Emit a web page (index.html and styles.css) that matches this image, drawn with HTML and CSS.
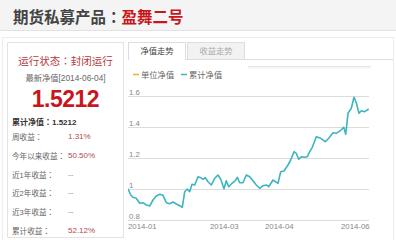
FILE: index.html
```html
<!DOCTYPE html>
<html>
<head>
    <title>期货私募产品：盈舞二号</title>
    <link rel="stylesheet" href="styles.css">
</head>
<body>
    <div class="page-title">期货私募产品<span class="colon">：</span><span class="fund-name">盈舞二号</span></div>
    <div class="fund-container">
        <div class="summary-box">
            <div class="status">运行状态<span class="colon">：</span>封闭运行</div>
            <div class="latest-label">最新净值[2014-06-04]</div>
            <div class="latest-value">1.5212</div>
            <div class="total-nav">累计净值<span class="colon">：</span>1.5212</div>
            <div class="stat-row"><span class="stat-label">周收益<span class="colon">：</span></span><span class="stat-value">1.31%</span></div>
            <div class="stat-row"><span class="stat-label">今年以来收益<span class="colon">：</span></span><span class="stat-value">50.50%</span></div>
            <div class="stat-row"><span class="stat-label">近1年收益<span class="colon">：</span></span><span class="stat-empty">--</span></div>
            <div class="stat-row"><span class="stat-label">近2年收益<span class="colon">：</span></span><span class="stat-empty">--</span></div>
            <div class="stat-row"><span class="stat-label">近3年收益<span class="colon">：</span></span><span class="stat-empty">--</span></div>
            <div class="stat-row"><span class="stat-label">累计收益<span class="colon">：</span></span><span class="stat-value">52.12%</span></div>
        </div>
        <div class="chart-panel">
            <div class="tab-bar">
                <div class="tab tab-active">净值走势</div>
                <div class="tab">收益走势</div>
            </div>
            <svg class="chart" width="262" height="177" viewBox="130 60 262 177">
                <!-- toolbar line -->
                <line x1="250" y1="66.5" x2="373" y2="66.5" stroke="#e4e4e4" stroke-width="1"/>
                <line x1="250" y1="68" x2="373" y2="68" stroke="#f0f0f0" stroke-width="1"/>

                <!-- legend -->
                <line x1="135" y1="74.5" x2="141" y2="74.5" stroke="#e6b533" stroke-width="1.5"/>
                <text x="143" y="77.5" class="legend-text">单位净值</text>
                <line x1="183" y1="74.5" x2="189" y2="74.5" stroke="#3db5be" stroke-width="1.5"/>
                <text x="191" y="77.5" class="legend-text">累计净值</text>

                <!-- grid -->
                <g stroke="#dcdcdc" stroke-width="1">
                    <line x1="130" y1="96.5" x2="371" y2="96.5"/>
                    <line x1="130" y1="127.5" x2="371" y2="127.5"/>
                    <line x1="130" y1="158.5" x2="371" y2="158.5"/>
                    <line x1="130" y1="189.5" x2="371" y2="189.5"/>
                    <line x1="130" y1="220.5" x2="371" y2="220.5"/>
                </g>
                <text x="131" y="95" class="axis-text">1.6</text>
                <text x="131" y="126" class="axis-text">1.4</text>
                <text x="131" y="157" class="axis-text">1.2</text>
                <text x="131" y="188" class="axis-text">1</text>
                <text x="131" y="219" class="axis-text">0.8</text>

                <text x="130" y="229" class="axis-text">2014-01</text>
                <text x="212" y="229" class="axis-text">2014-03</text>
                <text x="267" y="229" class="axis-text">2014-04</text>
                <text x="343" y="229" class="axis-text">2014-06</text>

                <polyline fill="none" stroke="#3db5be" stroke-width="1.6" stroke-linejoin="round"
                    points="130,188.7 132.7,195 135,197.3 138.3,198.3 141.7,203.3 145,202.7 148.3,205 151.7,206 155,200 158.3,196 161.7,194.3 165,195.3 168.3,202.7 171.7,203.7 175,202 178.3,204 181.7,205.7 184.3,207.3 186.7,191.7 189.3,189 191.7,191.7 194,184.3 196.7,185 200,176.7 202.7,177.7 205,179.3 207.3,177.7 210,181.7 213.3,185 216.7,178.3 220,175 222.7,179.3 226,188.7 228.3,180.7 230.7,186.7 234,183.3 237.3,180.7 239.3,177.3 241.7,182.7 245,182.7 248.3,175 251.7,176.7 255,180.7 258.3,185 261.7,188.3 265,185.7 268.3,185 270.7,186.7 275,180 280,183.3 282.7,171.7 286,171 290,165 292.7,160 296,151.7 298.3,153.3 300.7,159.3 303.3,156.7 306.7,157.3 309.3,156.7 311.7,151.7 314.3,147.3 318.3,136.7 322.7,138.3 327.3,141.7 330.7,138.3 335,132.7 338.3,133.3 342.3,130.7 345.7,127.3 347.7,134.3 350,113.3 353.3,108.3 356,97.3 358.3,102.7 361,113.3 363.3,110.7 366.7,111.7 370.7,109"/>
            </svg>
        </div>
    </div>
</body>
</html>
```
FILE: styles.css
```css
body {
    margin: 0;
    font-family: "Liberation Sans", "Noto Sans CJK SC", sans-serif;
    background-color: #ffffff;
}

.colon {
    font-family: "Noto Sans CJK TC", sans-serif;
}

.page-title {
    height: 30px;
    padding-left: 13px;
    line-height: 32px;
    font-size: 15.5px;
    font-weight: bold;
    color: #444444;
    background-color: #f4f4f4;
    border-bottom: 1px solid #e2e2e2;
}

.fund-name {
    color: #c8161d;
}

.fund-container {
    display: flex;
    gap: 4px;
    margin: 6px 2px 0 2px;
    padding: 4px 0 4px 4px;
    border: 1px solid #ececec;
}

.summary-box {
    width: 117px;
    height: 196px;
    padding-top: 10px;
    box-sizing: border-box;
    border: 1px solid #e3e3e3;
}

.status {
    text-align: center;
    font-size: 10.5px;
    line-height: 16px;
    color: #b53a3d;
}

.latest-label {
    margin-top: 3px;
    text-align: center;
    font-size: 8.3px;
    line-height: 12px;
    color: #666666;
}

.latest-value {
    margin-top: 2px;
    text-align: center;
    font-size: 23px;
    font-weight: bold;
    letter-spacing: -0.5px;
    line-height: 26px;
    color: #c8161d;
}

.total-nav {
    margin-top: 5px;
    padding-left: 4px;
    font-size: 8px;
    font-weight: bold;
    line-height: 10px;
    color: #333333;
}

.stat-row {
    display: flex;
    padding-left: 4px;
    font-size: 7.6px;
    line-height: 17.8px;
}

.stat-label {
    width: 56px;
    flex-shrink: 0;
    color: #666666;
}

.stat-value {
    font-size: 8px;
    color: #b5474f;
}

.stat-empty {
    font-size: 8px;
    color: #888888;
}

.chart-panel {
    flex: 1;
}

.tab-bar {
    display: flex;
    height: 17px;
    border-bottom: 1px solid #dddddd;
}

.tab {
    width: 56px;
    margin-right: 1px;
    text-align: center;
    font-size: 8.3px;
    line-height: 16px;
    color: #aaaaaa;
    background-color: #f2f2f2;
    border: 1px solid #dddddd;
    border-bottom: none;
}

.tab-active {
    color: #444444;
    background-color: #ffffff;
    height: 17px;
}

.chart {
    display: block;
}

.legend-text {
    font-size: 8.3px;
    fill: #666666;
}

.axis-text {
    font-size: 7.8px;
    fill: #888888;
}
```
